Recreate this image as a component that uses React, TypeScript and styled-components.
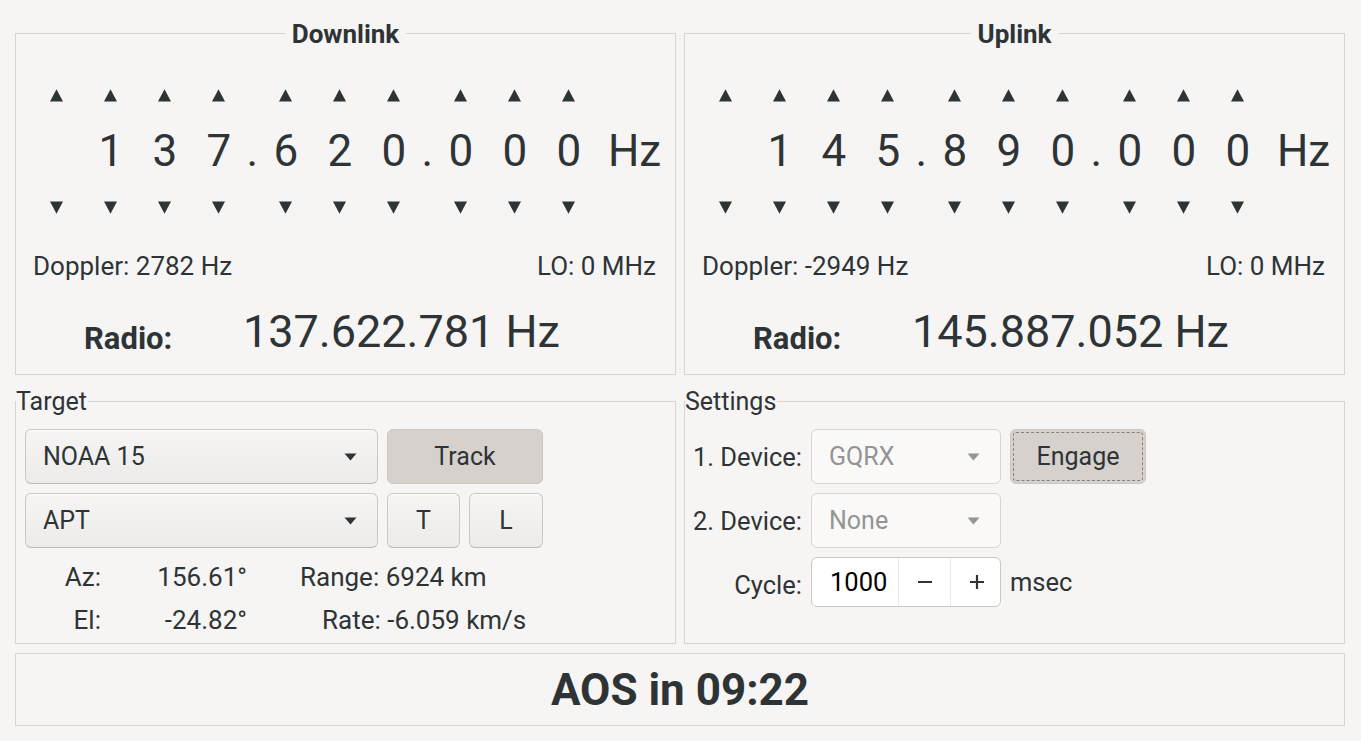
import React from "react";
import styled, { createGlobalStyle } from "styled-components";

const GlobalStyle = createGlobalStyle`
  html, body { margin: 0; padding: 0; background: #f6f5f4; }
  body { font-family: Roboto, "Noto Sans", "Liberation Sans", sans-serif; color: #2e3436; }
  *, *::before, *::after { box-sizing: border-box; }
`;

const Page = styled.main`
  width: 1361px;
  height: 741px;
  padding: 33px 16px 0 15px;
  display: grid;
  grid-template-columns: 1fr 1fr;
  align-content: start;
  column-gap: 8px;
`;

const Frame = styled.section<{ $h: number; $mt?: number; $span?: boolean }>`
  height: ${(p) => p.$h}px;
  margin-top: ${(p) => p.$mt ?? 0}px;
  grid-column: ${(p) => (p.$span ? "1 / -1" : "auto")};
  border: 1px solid #d8d4d0;
  display: flex;
  flex-direction: column;
`;

const FrameTitle = styled.h2<{ $center?: boolean }>`
  margin: -15px 0 0;
  height: 30px;
  line-height: 30px;
  align-self: ${(p) => (p.$center ? "center" : "flex-start")};
  padding: ${(p) => (p.$center ? "0 7px" : "0 1px 0 0")};
  background: #f6f5f4;
  font-size: ${(p) => (p.$center ? 26 : 25)}px;
  font-weight: ${(p) => (p.$center ? 700 : 400)};
  white-space: nowrap;
`;

/* ---------- frequency dial ---------- */

const Dial = styled.div`
  margin-top: 26.5px;
  align-self: center;
  display: grid;
  grid-template-columns: repeat(4, 54px) 13px repeat(3, 54px) 13px repeat(3, 54px) auto;
  grid-template-rows: 40px 70px 44px;
  align-items: center;
  justify-items: center;
`;

const DialChar = styled.span`
  font-size: 44px;
  line-height: 1;
  font-weight: 400;
`;

const Unit = styled(DialChar)`
  margin-left: 12px;
`;

const ArrowBtn = styled.svg`
  width: 13px;
  height: 13px;
  display: block;
  fill: #2e3436;
`;

const Up = () => (
  <ArrowBtn viewBox="0 0 13 13">
    <polygon points="0,12.6 6.5,0.2 13,12.6" />
  </ArrowBtn>
);
const Down = () => (
  <ArrowBtn viewBox="0 0 13 13">
    <polygon points="0,0.4 13,0.4 6.5,12.8" />
  </ArrowBtn>
);

type Cell = { kind: "digit"; ch: string } | { kind: "dot" } | { kind: "unit" };

const buildCells = (digits: string): Cell[] => {
  const d = digits.split("");
  const cells: Cell[] = [];
  d.forEach((ch, i) => {
    cells.push({ kind: "digit", ch });
    if (i === 3 || i === 6) cells.push({ kind: "dot" });
  });
  cells.push({ kind: "unit" });
  return cells;
};

const FrequencyDial: React.FC<{ digits: string }> = ({ digits }) => {
  const cells = buildCells(digits);
  return (
    <Dial>
      {cells.map((c, i) => (c.kind === "digit" ? <Up key={"u" + i} /> : <span key={"u" + i} />))}
      {cells.map((c, i) =>
        c.kind === "digit" ? (
          <DialChar key={"d" + i}>{c.ch.trim() ? c.ch : "\u00a0"}</DialChar>
        ) : c.kind === "dot" ? (
          <DialChar key={"d" + i}>.</DialChar>
        ) : (
          <Unit key={"d" + i}>Hz</Unit>
        )
      )}
      {cells.map((c, i) => (c.kind === "digit" ? <Down key={"w" + i} /> : <span key={"w" + i} />))}
    </Dial>
  );
};

const InfoRow = styled.div`
  margin-top: 21.5px;
  height: 30px;
  padding: 0 19px 0 17px;
  display: flex;
  align-items: center;
  justify-content: space-between;
  font-size: 26px;
  line-height: 1;
  white-space: pre;
`;

const RadioRow = styled.div`
  margin-top: 27.5px;
  padding-left: 68px;
  display: flex;
  align-items: flex-end;
`;

const RadioLabel = styled.span`
  width: 159px;
  font-size: 31px;
  font-weight: 700;
  line-height: 1;
`;

const RadioFreq = styled.span`
  font-size: 45px;
  line-height: 1;
`;

const LinkPanel: React.FC<{
  title: string;
  digits: string;
  doppler: string;
  radio: string;
}> = ({ title, digits, doppler, radio }) => (
  <Frame $h={342}>
    <FrameTitle $center>{title}</FrameTitle>
    <FrequencyDial digits={digits} />
    <InfoRow>
      <span>Doppler: {doppler} Hz</span>
      <span>LO: 0 MHz</span>
    </InfoRow>
    <RadioRow>
      <RadioLabel>Radio:</RadioLabel>
      <RadioFreq>{radio} Hz</RadioFreq>
    </RadioRow>
  </Frame>
);

/* ---------- controls ---------- */

const ControlGrid = styled.div<{ $cols: string; $pad: number }>`
  margin-top: 12px;
  padding-left: ${(p) => p.$pad}px;
  display: grid;
  grid-template-columns: ${(p) => p.$cols};
  grid-auto-rows: 55px;
  column-gap: 9px;
  row-gap: 9px;
  align-items: center;
`;

const Combo = styled.div<{ $disabled?: boolean }>`
  height: 55px;
  display: flex;
  align-items: center;
  justify-content: space-between;
  padding: 0 20px 0 17px;
  border: 1px solid ${(p) => (p.$disabled ? "#d9d4cf" : "#cdc7c2")};
  border-bottom-color: ${(p) => (p.$disabled ? "#d9d4cf" : "#bfb8b1")};
  border-radius: 6px;
  background: ${(p) => (p.$disabled ? "#faf9f8" : "linear-gradient(#f6f5f4, #edebe9)")};
  color: ${(p) => (p.$disabled ? "#929595" : "#2e3436")};
  font-size: 25px;
  box-shadow: ${(p) => (p.$disabled ? "none" : "inset 0 1px rgba(255,255,255,0.8)")};
`;

const ComboArrow = styled.svg<{ $disabled?: boolean }>`
  width: 13px;
  height: 8px;
  fill: ${(p) => (p.$disabled ? "#929595" : "#2e3436")};
`;

const Caret: React.FC<{ disabled?: boolean }> = ({ disabled }) => (
  <ComboArrow $disabled={disabled} viewBox="0 0 13 8">
    <polygon points="0.5,0.5 12.5,0.5 6.5,7.5" />
  </ComboArrow>
);

const Button = styled.button<{ $active?: boolean; $focus?: boolean; $span?: number; $w?: number }>`
  grid-column: span ${(p) => p.$span ?? 1};
  width: ${(p) => (p.$w ? `${p.$w}px` : "auto")};
  height: 55px;
  margin: 0;
  padding: 0;
  font-family: inherit;
  font-size: 25px;
  color: #2e3436;
  border: 1px solid #cdc7c2;
  border-bottom-color: ${(p) => (p.$active ? "#cdc7c2" : "#bfb8b1")};
  border-radius: 6px;
  background: ${(p) => (p.$active ? "#d6d1cd" : "linear-gradient(#f6f5f4, #edebe9)")};
  box-shadow: ${(p) => (p.$active ? "none" : "inset 0 1px rgba(255,255,255,0.8)")};
  outline: ${(p) => (p.$focus ? "1px dashed rgba(46,52,54,0.5)" : "none")};
  outline-offset: -4px;
`;

const Readout = styled.div`
  margin-top: 14px;
  display: grid;
  grid-template-columns: 85px 146px auto;
  grid-auto-rows: 30px;
  row-gap: 13px;
  align-items: center;
  font-size: 26px;
  line-height: 1;
  white-space: nowrap;
`;

const RLabel = styled.span`
  justify-self: end;
`;

const RExtra = styled.span<{ $indent: number }>`
  margin-left: ${(p) => p.$indent}px;
`;

const FieldLabel = styled.span`
  justify-self: end;
  font-size: 25.5px;
  white-space: nowrap;
`;

const Spin = styled.div`
  height: 50px;
  align-self: start;
  display: grid;
  grid-template-columns: 86px 52px 52px;
  border: 1px solid #cdc7c2;
  border-radius: 6px;
  background: #ffffff;
  overflow: hidden;
`;

const SpinValue = styled.span`
  display: flex;
  align-items: center;
  padding-left: 18px;
  font-size: 25.5px;
  color: #000;
`;

const SpinBtn = styled.span`
  display: flex;
  align-items: center;
  justify-content: center;
  border-left: 1px solid #ebe8e5;
`;

const SpinIcon = styled.svg`
  width: 14px;
  height: 14px;
  stroke: #2e3436;
  stroke-width: 2.2;
`;

const Unit2 = styled.span`
  align-self: start;
  height: 50px;
  display: flex;
  align-items: center;
  font-size: 25.5px;
`;

const Status = styled.div`
  flex: 1;
  display: flex;
  align-items: center;
  justify-content: center;
  font-size: 44px;
  font-weight: 700;
  line-height: 1;
`;

export default function App() {
  return (
    <>
      <GlobalStyle />
      <Page>
        <LinkPanel title="Downlink" digits=" 137620000" doppler="2782" radio="137.622.781" />
        <LinkPanel title="Uplink" digits=" 145890000" doppler="-2949" radio="145.887.052" />

        <Frame $h={243} $mt={26}>
          <FrameTitle>Target</FrameTitle>
          <ControlGrid $cols="353px 73px 74px" $pad={9}>
            <Combo>
              <span>NOAA 15</span>
              <Caret />
            </Combo>
            <Button $active $span={2}>Track</Button>
            <Combo>
              <span>APT</span>
              <Caret />
            </Combo>
            <Button>T</Button>
            <Button>L</Button>
          </ControlGrid>
          <Readout>
            <RLabel>Az:</RLabel>
            <RLabel>156.61°</RLabel>
            <RExtra $indent={53}>Range: 6924 km</RExtra>
            <RLabel>El:</RLabel>
            <RLabel>-24.82°</RLabel>
            <RExtra $indent={75}>Rate: -6.059 km/s</RExtra>
          </Readout>
        </Frame>

        <Frame $h={243} $mt={26}>
          <FrameTitle>Settings</FrameTitle>
          <ControlGrid $cols="112px 190px auto" $pad={5}>
            <FieldLabel>1. Device:</FieldLabel>
            <Combo $disabled>
              <span>GQRX</span>
              <Caret disabled />
            </Combo>
            <Button $active $focus $w={136}>Engage</Button>
            <FieldLabel>2. Device:</FieldLabel>
            <Combo $disabled>
              <span>None</span>
              <Caret disabled />
            </Combo>
            <span />
            <FieldLabel>Cycle:</FieldLabel>
            <Spin>
              <SpinValue>1000</SpinValue>
              <SpinBtn>
                <SpinIcon viewBox="0 0 14 14">
                  <line x1="0" y1="7" x2="14" y2="7" />
                </SpinIcon>
              </SpinBtn>
              <SpinBtn>
                <SpinIcon viewBox="0 0 14 14">
                  <line x1="0" y1="7" x2="14" y2="7" />
                  <line x1="7" y1="0" x2="7" y2="14" />
                </SpinIcon>
              </SpinBtn>
            </Spin>
            <Unit2>msec</Unit2>
          </ControlGrid>
        </Frame>

        <Frame $h={73} $mt={9} $span>
          <Status>AOS in 09:22</Status>
        </Frame>
      </Page>
    </>
  );
}
